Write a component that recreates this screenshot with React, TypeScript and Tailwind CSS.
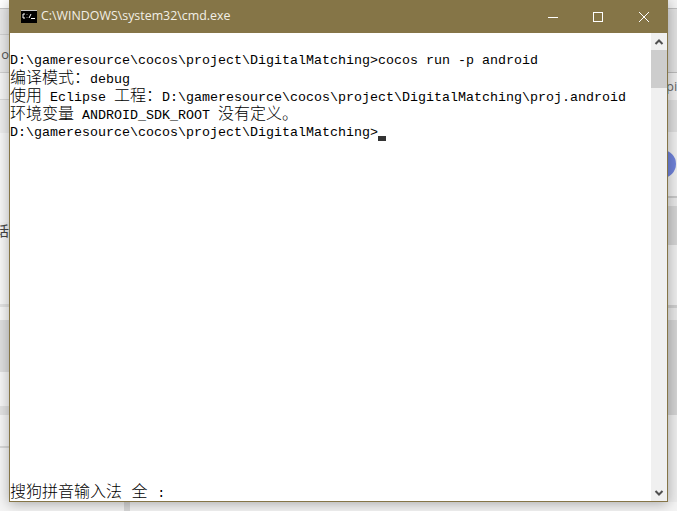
function Cjk({ children }: { children: string }) {
  return <span className="text-[16px] font-light">{children}</span>;
}

function LeftStrip() {
  return (
    <div className="w-[9px] h-[502px] flex flex-col bg-[#f3f3f3] overflow-hidden">
      <div className="h-[9px] shrink-0 bg-white border-b border-[#c4c4c4]"></div>
      <div className="h-[26px] shrink-0 bg-[#e6e6e6] border-b border-[#d0d0d0]"></div>
      <div className="h-[38px] shrink-0 bg-[#e9e9e9] border-b border-[#cfcfcf] pt-[2px] flex justify-end items-center">
        <span className="text-[13px] text-[#555] font-['Open_Sans',sans-serif] leading-none">o</span>
      </div>
      <div className="h-[27px] shrink-0 bg-[#f4f4f4] border-b border-[#d8d8d8]"></div>
      <div className="h-[33px] shrink-0 bg-[#ececec]"></div>
      <div className="h-[89px] shrink-0 bg-[#f6f6f6]"></div>
      <div className="h-[16px] shrink-0 flex justify-end items-center overflow-hidden">
        <span className="text-[14px] text-[#444] font-['Noto_Sans_CJK_SC',sans-serif] leading-none">话</span>
      </div>
      <div className="h-[66px] shrink-0 bg-[#f7f7f7]"></div>
      <div className="h-[3px] shrink-0 bg-[#e2e2e2]"></div>
      <div className="h-[13px] shrink-0 bg-[#f7f7f7]"></div>
      <div className="h-[52px] shrink-0 bg-[#dedede]"></div>
      <div className="h-[34px] shrink-0 bg-[#f5f5f5]"></div>
      <div className="h-[9px] shrink-0 bg-[#e2e2e2]"></div>
      <div className="h-[31px] shrink-0 bg-[#f5f5f5]"></div>
      <div className="h-[2px] shrink-0 bg-[#d8d8d8]"></div>
      <div className="flex-1 bg-[#f4f4f4]"></div>
    </div>
  );
}

function RightStrip() {
  return (
    <div className="w-[9px] h-[502px] flex flex-col bg-[#f1f1f1] overflow-hidden">
      <div className="h-[9px] shrink-0 bg-[#f2f2f2] border-b border-[#bdbdbd]"></div>
      <div className="h-[64px] shrink-0 bg-[#dfdfdf] border-b border-[#b9b9b9]"></div>
      <div className="h-[27px] shrink-0 bg-[#ececec] flex items-center overflow-hidden">
        <span className="text-[13px] text-[#666] font-['Open_Sans',sans-serif] leading-none ml-[-2px]">pic</span>
      </div>
      <div className="h-[32px] shrink-0 bg-[#dcdcdc]"></div>
      <div className="h-[64px] shrink-0 bg-[#ededed] relative">
        <div className="absolute left-[-20px] top-[18px] w-[28px] h-[28px] rounded-full bg-[#6f82d8]"></div>
      </div>
      <div className="h-[2px] shrink-0 bg-[#c6c6c6]"></div>
      <div className="h-[8px] shrink-0 bg-[#e6e6e6]"></div>
      <div className="h-[39px] shrink-0 bg-[#d2d2d2]"></div>
      <div className="h-[60px] shrink-0 bg-[#ececec]"></div>
      <div className="h-[3px] shrink-0 bg-[#cdcdcd]"></div>
      <div className="h-[12px] shrink-0 bg-[#e6e6e6]"></div>
      <div className="h-[95px] shrink-0 bg-[#d2d2d2]"></div>
      <div className="flex-1 bg-[#ececec]"></div>
    </div>
  );
}

function TitleBar() {
  return (
    <div className="h-[33px] shrink-0 bg-[#857547] flex items-center">
      <svg width="16" height="13" viewBox="0 0 16 13" className="ml-[11px] shrink-0">
        <rect x="0" y="0" width="16" height="13" fill="#000" />
        <rect x="0" y="0" width="16" height="1" fill="#c8c8c8" />
        <path d="M4 4H2V8H4M6 4.5V5M6 7V7.5M8 8L10 4M10 8.5H14" stroke="#fff" strokeWidth="1" fill="none" />
      </svg>
      <span className="ml-[4px] text-[12.4px] leading-none text-[#f2efe6] font-['Open_Sans',sans-serif]">
        C:\WINDOWS\system32\cmd.exe
      </span>
      <div className="ml-auto flex h-full">
        <div className="w-[45px] flex items-center justify-center">
          <svg width="10" height="10" viewBox="0 0 10 10">
            <path d="M0 5.5H10" stroke="#fff" strokeWidth="1" />
          </svg>
        </div>
        <div className="w-[46px] flex items-center justify-center">
          <svg width="10" height="10" viewBox="0 0 10 10">
            <rect x="0.5" y="0.5" width="9" height="9" stroke="#fff" strokeWidth="1" fill="none" />
          </svg>
        </div>
        <div className="w-[46px] flex items-center justify-center">
          <svg width="10" height="10" viewBox="0 0 10 10">
            <path d="M0 0L10 10M10 0L0 10" stroke="#fff" strokeWidth="1" />
          </svg>
        </div>
      </div>
    </div>
  );
}

function Scrollbar() {
  return (
    <div className="w-[16px] shrink-0 bg-[#f0f0f0] flex flex-col">
      <div className="h-[17px] flex items-center justify-center">
        <svg width="10" height="8" viewBox="0 0 10 8">
          <path d="M1.5 6L5 2.5L8.5 6" stroke="#505050" strokeWidth="2" fill="none" />
        </svg>
      </div>
      <div className="h-[38px] bg-[#cdcdcd]"></div>
      <div className="flex-1"></div>
      <div className="h-[17px] flex items-center justify-center">
        <svg width="10" height="8" viewBox="0 0 10 8">
          <path d="M1.5 2L5 5.5L8.5 2" stroke="#505050" strokeWidth="2" fill="none" />
        </svg>
      </div>
    </div>
  );
}

function Console() {
  return (
    <div className="flex-1 min-w-0 bg-white text-black pt-[19px] flex flex-col whitespace-pre text-[13.33px] leading-[18px] font-['Liberation_Mono','Noto_Sans_CJK_SC',monospace]">
      <div className="h-[18px]">D:\gameresource\cocos\project\DigitalMatching&gt;cocos run -p android</div>
      <div className="h-[18px]"><Cjk>编译模式：</Cjk>debug</div>
      <div className="h-[18px]"><Cjk>使用</Cjk> Eclipse <Cjk>工程：</Cjk>D:\gameresource\cocos\project\DigitalMatching\proj.android</div>
      <div className="h-[18px]"><Cjk>环境变量</Cjk> ANDROID_SDK_ROOT <Cjk>没有定义。</Cjk></div>
      <div className="h-[18px] flex items-start">
        <span>D:\gameresource\cocos\project\DigitalMatching&gt;</span>
        <span className="w-[8px] h-[5px] mt-[12px] bg-[#333]"></span>
      </div>
      <div className="mt-auto -mb-[1px] h-[18px]"><Cjk>搜狗拼音输入法 全 </Cjk>:</div>
    </div>
  );
}

export default function App() {
  return (
    <div className="w-[677px] h-[511px] overflow-hidden bg-[#f4f4f4] flex flex-col">
      <div className="flex h-[502px] shrink-0">
        <LeftStrip />
        <div className="relative z-10 w-[659px] h-[502px] shrink-0 flex flex-col border-x border-b border-[#857547] shadow-[0_2px_12px_rgba(0,0,0,0.3)]">
          <TitleBar />
          <div className="flex-1 min-h-0 flex">
            <Console />
            <Scrollbar />
          </div>
        </div>
        <RightStrip />
      </div>
      <div className="h-[9px] shrink-0 bg-[#f4f4f4] pl-[124px]">
        <div className="w-[6px] h-full bg-[#d8d8d8]"></div>
      </div>
    </div>
  );
}
